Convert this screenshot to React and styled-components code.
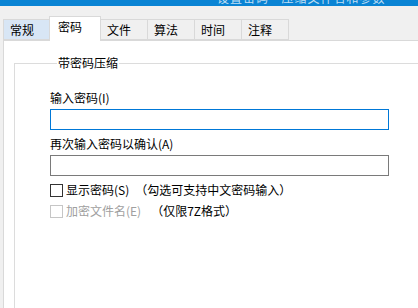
import React from 'react';
import styled, { createGlobalStyle } from 'styled-components';

const GlobalStyle = createGlobalStyle`
  html, body {
    margin: 0;
    padding: 0;
    background: #f0f0f0;
  }
  body {
    font-family: "Noto Sans CJK SC", "Microsoft YaHei", sans-serif;
    font-size: 12px;
    color: #000;
  }
`;

const Window = styled.div`
  width: 418px;
  height: 308px;
  display: flex;
  flex-direction: column;
  overflow: hidden;
  background: #f0f0f0;
`;

const TitleBar = styled.div`
  height: 6px;
  flex: none;
  background: #0a84d4;
  display: flex;
  align-items: flex-end;
  padding: 0 0 2px 217px;
  box-sizing: border-box;
  overflow: hidden;
`;

const TitleText = styled.span`
  color: rgba(255, 255, 255, 0.75);
  font-size: 12px;
  line-height: 12px;
  white-space: nowrap;
  letter-spacing: 1px;
`;

const TabStrip = styled.div`
  height: 34px;
  flex: none;
  display: flex;
  align-items: flex-end;
  padding-left: 3px;
`;

const Tab = styled.div`
  position: relative;
  box-sizing: border-box;
  width: ${(p) => (p.$active ? '52px' : '48px')};
  height: ${(p) => (p.$active ? '25px' : '21px')};
  margin: ${(p) => (p.$active ? '0 -1px -1px -1px' : '0 -1px 0 0')};
  padding-left: ${(p) => (p.$active ? '8px' : '6px')};
  border: 1px solid #d9d9d9;
  border-bottom: ${(p) => (p.$active ? 'none' : '1px solid #d9d9d9')};
  background: ${(p) => (p.$active ? '#ffffff' : p.$hover ? '#d8e6f5' : '#f0f0f0')};
  z-index: ${(p) => (p.$active ? 2 : 1)};
  font-size: 12px;
  line-height: ${(p) => (p.$active ? '20px' : '19px')};
  white-space: nowrap;
`;

const Panel = styled.div`
  flex: 1;
  margin-left: 3px;
  background: #ffffff;
  border-top: 1px solid #d9d9d9;
  border-left: 1px solid #d9d9d9;
  padding: 15px 0 0 10px;
`;

const GroupBox = styled.fieldset`
  margin: 0;
  width: 600px;
  min-height: 400px;
  box-sizing: border-box;
  border: 1px solid #dcdcdc;
  padding: 20px 0 0 35px;
`;

const GroupTitle = styled.legend`
  margin-left: 7px;
  padding: 0 1px;
  font-size: 12px;
  line-height: 14px;
`;

const FieldLabel = styled.div`
  font-size: 12px;
  line-height: 16px;
  height: 16px;
  margin-bottom: 3px;
  white-space: nowrap;
`;

const PasswordInput = styled.input`
  display: block;
  box-sizing: border-box;
  width: 339px;
  height: 21px;
  margin: 0 0 6px 0;
  padding: 0 3px;
  border: 1px solid ${(p) => (p.$focused ? '#0078d7' : '#7a7a7a')};
  outline: none;
  background: #ffffff;
  font-family: inherit;
  font-size: 12px;
`;

const CheckRow = styled.div`
  display: flex;
  align-items: center;
  height: 16px;
  margin-top: ${(p) => p.$top}px;
  white-space: nowrap;
  line-height: 16px;
`;

const CheckBox = styled.span`
  flex: none;
  width: 13px;
  height: 13px;
  box-sizing: border-box;
  border: 1px solid ${(p) => (p.$disabled ? '#c6c6c6' : '#333333')};
  background: #ffffff;
  margin-right: 3px;
`;

const CheckText = styled.span`
  color: ${(p) => (p.$disabled ? '#a0a0a0' : '#000000')};
`;

const Hint = styled.span`
  margin-left: ${(p) => p.$gap}px;
  color: #000000;
`;

const tabs = ['常规', '密码', '文件', '算法', '时间', '注释'];

export default function App() {
  return (
    <>
      <GlobalStyle />
      <Window>
        <TitleBar>
          <TitleText>设置密码 - 压缩文件名和参数</TitleText>
        </TitleBar>
        <TabStrip>
          {tabs.map((t, i) => (
            <Tab key={t} $active={i === 1} $hover={i === 0}>
              {t}
            </Tab>
          ))}
        </TabStrip>
        <Panel>
          <GroupBox>
            <GroupTitle>带密码压缩</GroupTitle>
            <FieldLabel>输入密码(I)</FieldLabel>
            <PasswordInput type="password" $focused readOnly />
            <FieldLabel>再次输入密码以确认(A)</FieldLabel>
            <PasswordInput type="password" readOnly />
            <CheckRow $top={4}>
              <CheckBox />
              <CheckText>显示密码(S)</CheckText>
              <Hint $gap={6}>（勾选可支持中文密码输入）</Hint>
            </CheckRow>
            <CheckRow $top={5}>
              <CheckBox $disabled />
              <CheckText $disabled>加密文件名(E)</CheckText>
              <Hint $gap={10}>（仅限7Z格式）</Hint>
            </CheckRow>
          </GroupBox>
        </Panel>
      </Window>
    </>
  );
}
